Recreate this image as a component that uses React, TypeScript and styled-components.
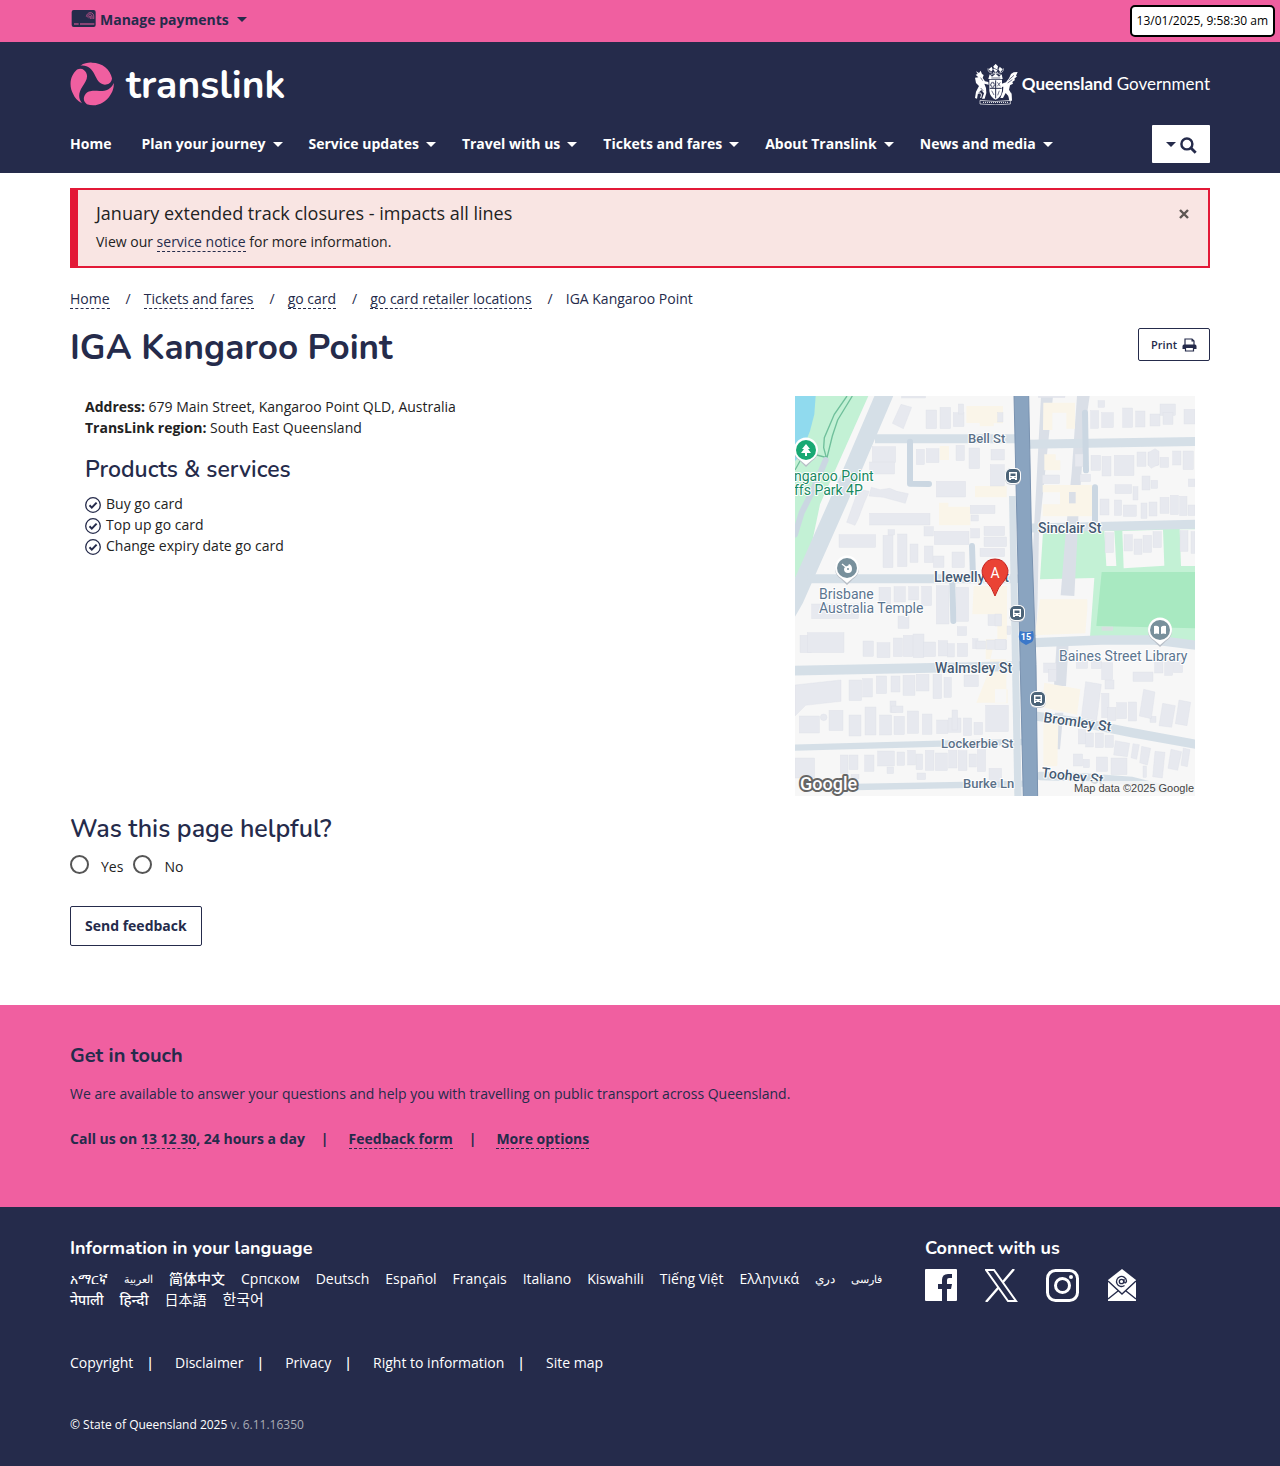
import React from "react";
import styled, { createGlobalStyle } from "styled-components";

const navy = "#252b4b";
const pink = "#f05fa0";
const bodyFont = '"Open Sans", "Noto Sans", "Noto Sans CJK SC", sans-serif';
const headFont = 'Nunito, Lato, "Open Sans", sans-serif';

const GlobalStyle = createGlobalStyle`
  *, *::before, *::after { box-sizing: border-box; }
  body { margin: 0; background: #fff; color: #222; font: 14px/21px ${bodyFont}; }
  h1, h2, p, ul { margin: 0; padding: 0; }
  ul { list-style: none; }
  a { color: inherit; text-decoration: none; }
  button { font: inherit; color: inherit; cursor: pointer; }
  svg { display: block; flex: none; }
`;

const Container = styled.div`
  max-width: 1170px;
  margin: 0 auto;
  padding: 0 15px;
`;

const Row = styled.div<{ $between?: boolean; $align?: string }>`
  display: flex;
  align-items: ${(p) => p.$align ?? "center"};
  justify-content: ${(p) => (p.$between ? "space-between" : "flex-start")};
`;

const Caret = styled.span`
  display: inline-block;
  border: 5px solid transparent;
  border-top-color: currentColor;
  border-bottom: 0;
`;

/* ---------- top bar ---------- */
const TopBar = styled.div`
  position: relative;
  background: ${pink};
  color: ${navy};
`;
const PaymentsButton = styled.button`
  display: flex;
  align-items: center;
  gap: 8px;
  height: 42px;
  padding: 0 0 4px;
  border: 0;
  background: none;
  font-weight: 700;
`;
const CardLabel = styled.span`
  display: flex;
  align-items: center;
  gap: 3px;
`;
const Timestamp = styled.time`
  position: absolute;
  top: 5px;
  right: 5px;
  padding: 4px 5px;
  border: 2px solid #000;
  border-radius: 5px;
  background: #fff;
  color: #000;
  font-size: 12px;
  line-height: 20px;
`;

/* ---------- header ---------- */
const Header = styled.header`
  background: ${navy};
  color: #fff;
  padding: 20px 0 10px;
`;
const Brand = styled.a`
  display: flex;
  align-items: center;
  gap: 12px;
`;
const Wordmark = styled.span`
  padding-top: 4px;
  font: 700 39px/40px ${headFont};
`;
const GovBrand = styled.a`
  display: flex;
  align-items: center;
  gap: 4px;
  font: 400 17px/44px Lato, sans-serif;
`;
const NavRow = styled(Row)`
  margin-top: 19px;
`;
const NavList = styled.ul`
  display: flex;
  gap: 26px;
`;
const NavLink = styled.a`
  display: flex;
  align-items: center;
  gap: 7px;
  padding-bottom: 2px;
  font-weight: 700;

  span { margin-top: 2px; }
`;
const NavHome = styled(NavLink)`
  margin-right: 4px;
`;
const SearchButton = styled.button`
  display: flex;
  align-items: center;
  justify-content: center;
  gap: 4px;
  width: 58px;
  height: 38px;
  padding: 0;
  border: 0;
  border-radius: 1px;
  background: #fff;
  color: ${navy};

  svg { margin-top: 3px; }
`;

/* ---------- main ---------- */
const Alert = styled.section`
  display: flex;
  justify-content: space-between;
  align-items: flex-start;
  margin-top: 15px;
  padding: 11px 18px 14px;
  border: 2px solid #e31937;
  border-left-width: 8px;
  background: #f9e5e3;
`;
const AlertTitle = styled.h2`
  margin-bottom: 6px;
  font: 400 18px/24px ${bodyFont};
`;
const CloseButton = styled.button`
  display: flex;
  padding: 8px 1px;
  border: 0;
  background: none;
`;
const DashedLink = styled.a`
  border-bottom: 1px dashed ${navy};
  color: ${navy};
`;
const Crumbs = styled.ol`
  display: flex;
  flex-wrap: wrap;
  margin: 21px 0 0;
  padding: 0;
  list-style: none;
  line-height: 19px;
  color: ${navy};

  li + li::before {
    content: "/";
    padding: 0 13px 0 16px;
  }
`;
const TitleRow = styled(Row)`
  margin-top: 16px;
`;
const PageTitle = styled.h1`
  font: 700 35px/48px ${headFont};
  color: ${navy};
`;
const PrintButton = styled.button`
  display: flex;
  align-items: center;
  gap: 5px;
  height: 33px;
  margin-top: 4px;
  padding: 0 12px;
  border: 1px solid ${navy};
  border-radius: 2px;
  background: #fff;
  color: ${navy};
  font-size: 11px;
  font-weight: 600;
`;
const Details = styled.div`
  display: flex;
  justify-content: space-between;
  gap: 30px;
  margin-top: 24px;
  padding: 0 15px;
`;
const SubTitle = styled.h2`
  margin: 17px 0 8px;
  font: 600 23px/30px ${headFont};
  color: ${navy};
`;
const Service = styled.li`
  display: flex;
  align-items: center;
  gap: 5px;

  svg { margin-top: 2px; }
`;
const HelpTitle = styled.h2`
  margin-top: 17px;
  font: 600 25px/32px ${headFont};
  color: ${navy};
`;
const Choices = styled.div`
  display: flex;
  gap: 10px;
  margin-top: 10px;
`;
const Choice = styled.label`
  display: flex;
  gap: 12px;
  line-height: 24px;
`;
const Radio = styled.input`
  appearance: none;
  width: 19px;
  height: 19px;
  margin: 0;
  border: 2px solid #555;
  border-radius: 50%;
  background: #fff;
  &:checked { background: ${navy}; box-shadow: inset 0 0 0 3px #fff; }
`;
const SendButton = styled.button`
  height: 40px;
  margin: 27px 0 59px;
  padding: 0 14px 2px;
  border: 1px solid ${navy};
  border-radius: 2px;
  background: #fff;
  color: ${navy};
  font-weight: 700;
`;

/* ---------- footer ---------- */
const Contact = styled.section`
  padding: 37px 0 58px;
  background: ${pink};
  color: ${navy};
`;
const ContactTitle = styled.h2`
  margin-bottom: 13px;
  font: 700 20px/28px ${headFont};
`;
const ContactLinks = styled(Row)`
  margin-top: 25px;
  font-weight: 700;
  line-height: 19px;
`;
const Bar = styled.span`
  padding: 0 20px 0 16px;
`;
const Footer = styled.footer`
  padding: 27px 0 31px;
  background: ${navy};
  color: #fff;
`;
const FooterGrid = styled.div`
  display: grid;
  grid-template-columns: 3fr 1fr;
`;
const FooterTitle = styled.h2`
  margin-bottom: 6px;
  font: 700 18px/28px ${headFont};
`;
const Languages = styled.ul`
  display: flex;
  flex-wrap: wrap;
  column-gap: 16px;
`;
const Language = styled.li<{ $size?: number; $thin?: boolean }>`
  height: 21px;
  font-size: ${(p) => p.$size ?? 14}px;
  font-weight: ${(p) => (p.$thin ? 400 : 500)};
`;
const Social = styled.div`
  display: flex;
  gap: 28px;
  padding-top: 1px;
`;
const LegalLinks = styled.ul`
  display: flex;
  flex-wrap: wrap;
  margin-top: 42px;
  font-weight: 500;

  li + li::before {
    content: "|";
    padding: 0 21px 0 13px;
    font-weight: 600;
  }
`;
const Copyright = styled.p`
  margin-top: 41px;
  font-size: 12px;
  font-weight: 500;
`;
const Version = styled.span`
  color: #a9abb5;
  font-weight: 400;
`;

/* ---------- drawings ---------- */
const CardIcon = () => (
  <svg width="27" height="20" viewBox="0 0 81 60" aria-hidden="true">
    <rect x="5" y="3" width="72" height="51" rx="6" fill={navy} />
    <path d="M12 45h14M30 45h43" stroke={pink} strokeWidth="3" />
    <g fill="none" stroke={pink} strokeWidth="2">
      <path d="M49 23C51 13 58 9 66 12c5 3 6 9 5 18M53 25c1-8 5-11 9-9 4 2 5 6 4 14M57 28c0-6 2-8 4-7 2 1 1 5 1 9" />
    </g>
  </svg>
);

const blade =
  "M62 197C75 188 90 187 97 188C128 188 152 208 157 235C156 250 144 254 136 254C118 253 112 238 104 222C96 207 84 194 62 197Z";
const SwirlLogo = () => (
  <svg width="44" height="44" viewBox="31 186 132 132" fill={pink} aria-hidden="true">
    <path d={blade} />
    <path d={blade} transform="rotate(120 97 252)" />
    <path d={blade} transform="rotate(240 97 252)" />
  </svg>
);

const CoatOfArms = () => (
  <svg width="44" height="42" viewBox="0 0 132 126" fill="#fff" aria-hidden="true">
    <path d="M46 50h38v33q-2 20-19 27q-17-7-19-27z" />
    <path d="M65 52v54M47 76h36" stroke={navy} strokeWidth="3" />
    <path d="M53 58h6v5h5v5h-5v5h-6v-5h-4v-5h4zM70 58l9 12M79 58l-9 12M53 83l7 13M76 83l-5 14" stroke={navy} strokeWidth="2" fill="none" />
    <path d="M43 48l4-14 7 7 11-9 10 9 8-7 3 14zM58 10l7-7 7 7-3 14h-8zM44 19l9-8 3 9-5 8zM86 19l-9-8-3 9 5 8z" />
    <path d="M54 30q-13-1-12-14M76 30q13-1 12-14M65 4v29M49 37q16-12 33 0M56 18l17 12M74 18L57 30" fill="none" stroke="#fff" strokeWidth="2" />
    <path d="M52 45h27M57 14l15 8M46 23l8 4" stroke={navy} strokeWidth="2" />
    <path d="M13 43l-8-8 6-2-5-8 9 5 5-7 4 10 5 3-3 9 7 10 10 2 1 8-13-3 5 13 1 15-5 17h-8l6-16-8-10-10 10-3 16-6-2 3-19 9-17-9-9-3-16z" />
    <path d="M96 58l9-12 6-13 8-5 12-1-5 11 3 2-8 7 2 4-8 6 2 5-9 5-3 13 8 14 1 19h-8l-3-14-8-9-8 15h-8l8-20 1-14-8 1 1-9z" />
    <path d="M104 51l16-14M101 60l14-10M20 44l6 9M20 75l8 9" stroke={navy} strokeWidth="2" />
    <path d="M12 91q15-6 8 14M112 91q-10-1-5 14" stroke="#fff" strokeWidth="3" fill="none" />
    <path d="M18 112q47 7 91 0v11q-45 5-91 0z" fill="none" stroke="#fff" strokeWidth="2" />
    <path d="M27 118h76" stroke="#fff" strokeWidth="3" strokeDasharray="3 3" />
  </svg>
);

const SearchIcon = () => (
  <svg width="17" height="17" viewBox="0 0 18 18" fill="none" stroke={navy} strokeWidth="2.6" aria-hidden="true">
    <circle cx="7.3" cy="7.3" r="5.8" />
    <path d="M11.6 11.6l5 5" strokeWidth="3" />
  </svg>
);

const CloseIcon = () => (
  <svg width="10" height="10" viewBox="0 0 10 10" stroke="#5d5653" strokeWidth="2.4" aria-hidden="true">
    <path d="M1 1l8 8M9 1L1 9" />
  </svg>
);

const PrintIcon = () => (
  <svg width="15" height="14" viewBox="0 0 15 14" fill={navy} aria-hidden="true">
    <path d="M3 7V1h7l2 2v4" fill="none" stroke={navy} strokeWidth="1.2" />
    <path d="M9.5 1v2.5H12z" />
    <path d="M2 6.500h11Q14.500 6.500 14.500 8.500V11H.5V8.500Q.5 6.500 2 6.500z" />
    <path d="M3.500 9.500h8V13h-8z" fill="#fff" stroke={navy} strokeWidth="1.2" />
  </svg>
);

const CheckIcon = () => (
  <svg width="16" height="16" viewBox="0 0 16 16" fill="none" stroke={navy} aria-hidden="true">
    <circle cx="8" cy="8" r="7.3" strokeWidth="1.3" />
    <path d="M4.500 8.300l2.300 2.300 4.800-5" strokeWidth="2" />
  </svg>
);

/* Building footprints in map units: x, y, width, height. */
const buildings: number[][] = [
  [320, 0, 72, 6], [393, 42, 32, 56], [435, 34, 32, 64], [475, 50, 32, 42], [490, 24, 16, 30],
  [232, 152, 70, 48], [224, 198, 75, 36], [364, 160, 24, 46], [394, 158, 38, 42], [483, 148, 25, 46],
  [522, 156, 32, 62], [588, 160, 40, 32], [586, 206, 42, 64], [424, 256, 88, 47], [224, 352, 181, 35],
  [132, 416, 110, 38], [264, 418, 30, 97], [308, 414, 28, 98], [279, 401, 20, 16], [345, 444, 24, 55],
  [387, 392, 28, 28], [418, 406, 104, 40], [527, 398, 27, 28], [526, 328, 74, 25], [528, 357, 22, 18],
  [567, 391, 62, 28], [567, 423, 68, 29], [555, 457, 74, 25], [388, 450, 26, 50], [415, 480, 32, 34],
  [471, 468, 37, 47], [252, 574, 35, 50], [297, 572, 34, 46], [341, 572, 30, 40], [380, 571, 30, 58],
  [424, 569, 38, 115], [484, 574, 37, 102],
  [608, 50, 16, 28], [730, 0, 80, 5], [887, 44, 24, 53], [920, 50, 35, 45], [909, 14, 20, 20],
  [983, 36, 30, 58], [1022, 45, 28, 48], [1065, 54, 30, 36], [1095, 24, 46, 34], [1104, 50, 30, 35], [1167, 40, 33, 44],
  [840, 174, 24, 38], [888, 178, 29, 45], [921, 181, 27, 59], [958, 178, 59, 61], [1026, 168, 27, 43],
  [1059, 168, 32, 40], [1095, 184, 26, 30], [1133, 165, 25, 42], [1164, 165, 31, 56], [742, 237, 52, 26],
  [855, 235, 32, 22], [960, 266, 50, 27], [1014, 272, 15, 40], [1041, 240, 24, 42], [1068, 253, 20, 24], [1180, 249, 20, 23],
  [915, 309, 27, 48], [958, 312, 22, 46], [985, 327, 39, 34], [1038, 321, 18, 46], [1062, 318, 24, 42],
  [1095, 304, 27, 48], [1126, 298, 24, 58], [1154, 301, 22, 58], [1179, 327, 21, 32],
  [930, 410, 26, 60], [987, 416, 25, 49], [1017, 429, 24, 46], [1044, 418, 26, 51], [1074, 407, 25, 48],
  [1155, 404, 24, 62], [1188, 407, 12, 65],
  [50, 624, 140, 44], [15, 718, 35, 52], [37, 710, 110, 60], [309, 660, 33, 37], [579, 656, 30, 33],
  [204, 735, 31, 46], [246, 740, 39, 45], [295, 726, 27, 56], [325, 718, 28, 64], [354, 714, 33, 71],
  [386, 738, 36, 44], [430, 734, 28, 46], [457, 743, 21, 40], [487, 692, 28, 27], [487, 742, 31, 40],
  [533, 728, 16, 30], [543, 735, 29, 24], [575, 732, 60, 28],
  [162, 852, 38, 62], [203, 848, 29, 55], [244, 840, 31, 53], [288, 840, 27, 48], [324, 838, 36, 60],
  [364, 835, 38, 50], [414, 835, 26, 73], [447, 844, 22, 60], [507, 837, 43, 35],
  [13, 960, 60, 51], [102, 943, 42, 61], [162, 957, 36, 63], [210, 933, 33, 84], [254, 957, 36, 60],
  [285, 915, 18, 34], [290, 930, 34, 20], [297, 961, 31, 55], [337, 945, 34, 67], [382, 954, 29, 61],
  [425, 972, 34, 41], [460, 966, 38, 43], [471, 942, 17, 60], [505, 966, 25, 53], [537, 979, 26, 37], [572, 928, 68, 79],
  [0, 1086, 59, 60], [136, 1077, 23, 55], [162, 1077, 27, 44], [209, 1077, 28, 49], [248, 1065, 50, 45],
  [276, 1113, 20, 20], [306, 1068, 23, 40], [338, 1063, 23, 44], [363, 1074, 20, 47], [391, 1063, 26, 60],
  [421, 1071, 36, 53], [461, 1063, 25, 53], [490, 1064, 26, 60], [522, 1074, 22, 39], [547, 1061, 25, 66],
  [168, 1135, 24, 14], [366, 1131, 26, 20], [582, 1117, 38, 40],
  [600, 654, 20, 36], [636, 690, 11, 26], [600, 730, 33, 30], [746, 801, 38, 28], [760, 820, 24, 36],
  [844, 795, 34, 22], [889, 795, 30, 23], [920, 800, 33, 51], [930, 852, 27, 27], [1014, 828, 60, 28],
  [1079, 795, 25, 36], [1109, 795, 24, 43], [1135, 794, 28, 36],
  [920, 892, 22, 73], [937, 934, 26, 40], [965, 920, 30, 48], [1000, 918, 25, 57], [1065, 961, 18, 18],
  [850, 1000, 22, 44], [872, 1011, 23, 42], [901, 1011, 24, 44], [930, 1018, 25, 36], [835, 1074, 28, 36],
  [865, 1090, 18, 25], [904, 1083, 34, 43], [948, 1086, 48, 50], [1044, 1110, 10, 34],
];

/* Rotated footprints. */
const blocks = [
  "M318 25L350 34 325 98 292 82z", "M190 280L223 286 207 322 191 365 180 388 155 379z",
  "M229 274L256 281 284 277 306 286 340 293 331 322 265 304 222 300z",
  "M0 867L138 852V916L32 928 0 960z",
  "M872 857L919 865 905 973 859 963z", "M1046 880L1080 888 1069 968 1033 960z",
  "M1103 922L1141 929 1130 994 1092 989z", "M1152 912L1187 919 1176 989 1141 983z",
  "M961 1034L1004 1042 997 1082 956 1077z", "M1014 1043L1033 1046 1025 1090 1008 1085z",
  "M1040 1051L1067 1057 1057 1107 1034 1100z", "M1080 1066L1110 1069 1102 1146 1073 1142z",
  "M1128 1060L1160 1067 1148 1123 1119 1117z", "M1165 1056L1185 1061 1177 1112 1158 1108z",
  "M1060 170L1080 158 1092 166V205L1068 217 1060 207z",
];

const Pin = ({ x, y, fill, children }: { x: number; y: number; fill: string; children: React.ReactNode }) => (
  <g transform={`translate(${x} ${y})`}>
    <path d="M0 16l-6-6a12 12 0 1 1 12 0z" fill="#b8bec6" transform="translate(0 1)" />
    <path d="M0 15l-6-5a12 12 0 1 1 12 0z" fill="#fff" />
    <circle r="10" fill={fill} />
    {children}
  </g>
);

const BusStop = ({ x, y }: { x: number; y: number }) => (
  <g transform={`translate(${x} ${y})`}>
    <rect x="-8" y="-8" width="16" height="17" rx="6" fill="#c3c9d2" />
    <rect x="-8" y="-8" width="16" height="16" rx="6" fill="#fff" />
    <rect x="-7" y="-7" width="14" height="14" rx="5" fill="#4b6378" />
    <path d="M-4-4h8v8h-2v-1h-4v1h-2z" fill="#fff" />
    <path d="M-2.500-2.500h5v2.500h-5z" fill="#4b6378" />
    <path d="M-2.500 1.500h1M1.500 1.500h1" stroke="#4b6378" />
  </g>
);

const MapText = styled.text<{ $kind: "road" | "lane" | "place" | "park" }>`
  font-family: Roboto, sans-serif;
  font-size: ${(p) => (p.$kind === "lane" ? "13px" : "14px")};
  font-weight: ${(p) => (p.$kind === "road" || p.$kind === "lane" ? 500 : 400)};
  fill: ${(p) => ({ road: "#455a73", lane: "#5b7188", place: "#5b7590", park: "#188a62" })[p.$kind]};
  stroke: #fff;
  stroke-width: 2px;
  stroke-linejoin: round;
  paint-order: stroke;
`;
const MapCredit = styled.text`
  font: 11px Arial, "Liberation Sans", sans-serif;
  fill: #444;
`;
const GoogleMark = styled.text`
  font: 500 18px Roboto, sans-serif;
  fill: #fff;
  stroke: #666;
  stroke-width: 4px;
  stroke-linejoin: round;
  paint-order: stroke;
`;
const MarkerText = styled.text`
  font: 14px Roboto, sans-serif;
  fill: #fff;
  text-anchor: middle;
`;
const ShieldText = styled.text`
  font: 700 9px Roboto, sans-serif;
  fill: #fff;
  text-anchor: middle;
`;
const MapFrame = styled.svg`
  max-width: 100%;
`;

const LocationMap = () => (
  <MapFrame width="400" height="400" viewBox="0 0 400 400" role="img" aria-label="Map of IGA Kangaroo Point">
    <g transform="scale(.333333)">
      <path fill="#f7f7f7" d="M0 0h1200v1200H0z" />
      <path fill="#c3f1d5" d="M0 0h220L75 325 50 445 0 550z" />
      <path fill="#90daee" d="M0 0h62L58 55 45 105 15 180 0 195z" />
      <g fill="none" stroke="#6fbf9b" strokeWidth="4">
        <path d="M156 0L118 55 88 125 86 155 94 185M172 0L128 72 112 120 96 185 65 177M15 195L0 222" />
      </g>
      <path d="M92 192L55 280 20 350 0 415" fill="none" stroke="#cbd7e2" strokeWidth="18" strokeLinecap="round" />

      <path fill="#c3f1d5" d="M744 408L1200 396V735L1050 720 885 724 898 546 735 550z" />
      <path fill="#f7f7f7" d="M928 405h30l6 105h-30zM982 405l122-4 4 108-122 8zM1154 400h46v110h-42z" />
      <path fill="#a8e9c1" d="M920 528H1200V697L904 690z" />
      <rect x="920" y="692" width="34" height="12" fill="#d8dfe0" />

      <path fill="#dadfe7" d="M738 0h36L732 408 728 606 724 720H700L718 380zM846 0h38L868 110 850 365 838 600 797 598 812 410 830 230z" />
      <path fill="#dadfe7" d="M785 740h36l-8 130h-36zM780 950h25l-10 110h-20z" />
      <path fill="#faf5e9" d="M745 20h95v78h-26V50h-42v52h-28zM748 175h34v18h14v30h-48zM743 267h148v94H743v-36h52v-36h-52zM514 30h110v52h-28v9h-42v-10h-40zM434 150h28v42h-28zM540 270h95v34h-95zM432 320h28v12h66v56h-94zM536 570h100v160h-36l-28 120-28 70h90V790h-62v-60h35v-75h-75zM735 610h142v28l-6 74-152 6zM600 880h38v42h-38zM748 860l108 20-10 76-106-22zM745 975l45 6-3 130h-42z" />
      <rect x="822" y="288" width="20" height="34" fill="#dadfe7" />

      <g fill="none" stroke="#d5dfe7" strokeLinecap="round">
        <path d="M275-20L175 215 0 610 -20 645" strokeWidth="52" />
        <path d="M240 128H660M700 145L1220 136M710 396L1220 384" strokeWidth="27" strokeLinecap="butt" />
        <path d="M50 548H665" strokeWidth="27" />
        <path d="M0 824L675 810" strokeWidth="29" />
        <path d="M720 740L920 732 1080 732 1220 750" strokeWidth="28" />
        <path d="M720 960L850 978 1010 1010 1220 1048" strokeWidth="28" />
        <path d="M0 1055L440 1043 680 1038" strokeWidth="19" />
        <path d="M180 1173L690 1163" strokeWidth="19" />
        <path d="M735 1140L870 1144 1010 1155 1110 1180" strokeWidth="25" />
      </g>
      <g fill="none" stroke="#cbd7e2" strokeWidth="18" strokeLinecap="round" strokeLinejoin="round">
        <path d="M345 137V263L402 264M531 450L534 545M472 560L475 675M870 50L873 223M900 274V375" />
      </g>
      <g fill="#e7e9ef" stroke="#dcdfe6" strokeWidth="1">
        {buildings.map(([x, y, w, h]) => (
          <rect key={`${x}-${y}`} x={x} y={y} width={w} height={h} />
        ))}
        {blocks.map((d) => (
          <path key={d} d={d} />
        ))}
        <circle cx="86" cy="964" r="10" />
      </g>
      <path fill="#d5dfe7" d="M642 300h20l18 900h-22z" />
      <path fill="#8aa4c0" stroke="#7892b0" strokeWidth="3" d="M657-4h44l8 400 14 410 5 400h-43l-14-600z" />
    </g>

    <MapText $kind="lane" x="173" y="47">Bell St</MapText>
    <MapText $kind="road" x="243" y="137">Sinclair St</MapText>
    <MapText $kind="road" x="139" y="186">Llewellyn St</MapText>
    <MapText $kind="road" x="140" y="277">Walmsley St</MapText>
    <MapText $kind="lane" x="146" y="352">Lockerbie St</MapText>
    <MapText $kind="lane" x="168" y="392">Burke Ln</MapText>
    <MapText $kind="road" transform="translate(248 326) rotate(8)">Bromley St</MapText>
    <MapText $kind="road" transform="translate(246 381) rotate(7)">Toohey St</MapText>
    <MapText $kind="park" x="-1" y="85">ngaroo Point</MapText>
    <MapText $kind="park" x="-1" y="99">ffs Park 4P</MapText>
    <MapText $kind="place" x="24" y="203">Brisbane</MapText>
    <MapText $kind="place" x="24" y="217">Australia Temple</MapText>
    <MapText $kind="place" x="264" y="265">Baines Street Library</MapText>

    <Pin x={11} y={54} fill="#19a974">
      <path d="M0-6l4 5H2l3 4H1v3h-2V3h-4l3-4h-2z" fill="#fff" />
    </Pin>
    <Pin x={52} y={172} fill="#78909c">
      <path d="M-5-4l5 4" stroke="#fff" strokeWidth="1.3" />
      <path d="M-1-1q1-2 2-1l1-2q3 1 3 5a4 4 0 0 1-8 0q0-2 2-2z" fill="#fff" />
      <circle cx="1" cy="1" r="1" fill="#78909c" />
    </Pin>
    <Pin x={365} y={234} fill="#78909c">
      <path d="M-6-4q3-1 5 1v7q-2-1-5 0zM6-4q-3-1-5 1v7q2-1 5 0z" fill="#fff" />
    </Pin>
    <BusStop x={218} y={80} />
    <BusStop x={222} y={217} />
    <BusStop x={243} y={303} />
    <path d="M225 235q7 2 13 0 2 7-1 11l-6 3-5-3q-4-4-1-11z" fill="#3b78c9" />
    <ShieldText x="231" y="244">15</ShieldText>
    <path d="M200 200q-3-9-9-15-6-8-3-14a13 13 0 0 1 24 0q3 6-3 14-6 6-9 15z" fill="#ea4335" stroke="#c5221f" />
    <MarkerText x="200" y="182">A</MarkerText>
    <path fill="#f7f7f7" fillOpacity=".8" d="M278 385h122v15H278z" />
    <MapCredit x="279" y="396">Map data ©2025 Google</MapCredit>
    <GoogleMark x="5" y="394">Google</GoogleMark>
  </MapFrame>
);

const FacebookIcon = () => (
  <svg width="32" height="32" viewBox="0 0 32 32" aria-hidden="true">
    <path fill="#fff" d="M1 0h30q1 0 1 1v30q0 1-1 1h-9V20h4l1-5h-5v-4q0-2 2-2h3V5h-4q-6 0-6 6v4h-4v5h4v12H1q-1 0-1-1V1q0-1 1-1z" />
  </svg>
);
const XIcon = () => (
  <svg width="33" height="33" viewBox="0 0 33 33" fill="none" stroke="#fff" aria-hidden="true">
    <path d="M1 1h8l22 31h-8z" strokeWidth="2" />
    <path d="M29 0L17.500 13.500M13.500 18.500L1 33" strokeWidth="2.400" />
  </svg>
);
const InstagramIcon = () => (
  <svg width="33" height="33" viewBox="0 0 33 33" fill="none" stroke="#fff" strokeWidth="3" aria-hidden="true">
    <rect x="1.500" y="1.500" width="30" height="30" rx="8" />
    <circle cx="16.500" cy="16.500" r="7" />
    <circle cx="25" cy="8" r="2" fill="#fff" stroke="none" />
  </svg>
);
const MailIcon = () => (
  <svg width="30" height="32" viewBox="0 0 30 32" aria-hidden="true">
    <path d="M15 0L29 11V32H1V11z" fill="#fff" />
    <path d="M1 12l14 13 14-13M1 30l10-8M29 30l-10-8" fill="none" stroke={navy} strokeWidth="1.400" />
    <g fill="none" stroke={navy} strokeWidth="1.300">
      <circle cx="14.500" cy="12.500" r="2.200" />
      <path d="M17 10v3.500q2 1 2.500-1.500a5 5 0 1 0-2 4.500" />
    </g>
  </svg>
);

const navItems = ["Plan your journey", "Service updates", "Travel with us", "Tickets and fares", "About Translink", "News and media"];
const crumbs = ["Home", "Tickets and fares", "go card", "go card retailer locations"];
const services = ["Buy go card", "Top up go card", "Change expiry date go card"];
const languages: { name: string; size?: number; thin?: boolean }[] = [
  { name: "አማርኛ" }, { name: "العربية", size: 11 }, { name: "简体中文" }, { name: "Српском" }, { name: "Deutsch" },
  { name: "Español" }, { name: "Français" }, { name: "Italiano" }, { name: "Kiswahili" }, { name: "Tiếng Việt" },
  { name: "Ελληνικά" }, { name: "دري", size: 12 }, { name: "فارسی", size: 11 }, { name: "नेपाली" },
  { name: "हिन्दी", size: 15 }, { name: "日本語", thin: true }, { name: "한국어", size: 15, thin: true },
];
const legal = ["Copyright", "Disclaimer", "Privacy", "Right to information", "Site map"];

export default function App() {
  return (
    <>
      <GlobalStyle />
      <TopBar>
        <Container>
          <PaymentsButton type="button">
            <CardLabel><CardIcon />Manage payments</CardLabel>
            <Caret />
          </PaymentsButton>
        </Container>
        <Timestamp dateTime="2025-01-13T09:58:30">13/01/2025, 9:58:30 am</Timestamp>
      </TopBar>

      <Header>
        <Container>
          <Row $between>
            <Brand href="#"><SwirlLogo /><Wordmark>translink</Wordmark></Brand>
            <GovBrand href="#"><CoatOfArms /><span><b>Queensland</b> Government</span></GovBrand>
          </Row>
          <NavRow as="nav" $between aria-label="Main">
            <NavList>
              <li><NavHome href="#">Home</NavHome></li>
              {navItems.map((item) => (
                <li key={item}><NavLink href="#">{item}<Caret /></NavLink></li>
              ))}
            </NavList>
            <SearchButton type="button" aria-label="Search"><Caret /><SearchIcon /></SearchButton>
          </NavRow>
        </Container>
      </Header>

      <Container as="main">
        <Alert>
          <div>
            <AlertTitle>January extended track closures - impacts all lines</AlertTitle>
            <p>View our <DashedLink href="#">service notice</DashedLink> for more information.</p>
          </div>
          <CloseButton type="button" aria-label="Close"><CloseIcon /></CloseButton>
        </Alert>

        <nav aria-label="Breadcrumb">
          <Crumbs>
            {crumbs.map((c) => (
              <li key={c}><DashedLink href="#">{c}</DashedLink></li>
            ))}
            <li>IGA Kangaroo Point</li>
          </Crumbs>
        </nav>

        <TitleRow $between $align="flex-start">
          <PageTitle>IGA Kangaroo Point</PageTitle>
          <PrintButton type="button">Print<PrintIcon /></PrintButton>
        </TitleRow>

        <Details>
          <div>
            <p><b>Address:</b> 679 Main Street, Kangaroo Point QLD, Australia</p>
            <p><b>TransLink region:</b> South East Queensland</p>
            <SubTitle>Products &amp; services</SubTitle>
            <ul>
              {services.map((s) => (
                <Service key={s}><CheckIcon />{s}</Service>
              ))}
            </ul>
          </div>
          <LocationMap />
        </Details>

        <form>
          <HelpTitle id="helpful">Was this page helpful?</HelpTitle>
          <Choices role="radiogroup" aria-labelledby="helpful">
            <Choice><Radio type="radio" name="helpful" value="yes" />Yes</Choice>
            <Choice><Radio type="radio" name="helpful" value="no" />No</Choice>
          </Choices>
          <SendButton type="button">Send feedback</SendButton>
        </form>
      </Container>

      <Contact>
        <Container>
          <ContactTitle>Get in touch</ContactTitle>
          <p>We are available to answer your questions and help you with travelling on public transport across Queensland.</p>
          <ContactLinks $align="baseline">
            <span>Call us on <DashedLink href="#">13 12 30</DashedLink>, 24 hours a day</span>
            <Bar>|</Bar>
            <DashedLink href="#">Feedback form</DashedLink>
            <Bar>|</Bar>
            <DashedLink href="#">More options</DashedLink>
          </ContactLinks>
        </Container>
      </Contact>

      <Footer>
        <Container>
          <FooterGrid>
            <section>
              <FooterTitle>Information in your language</FooterTitle>
              <Languages>
                {languages.map((l) => (
                  <Language key={l.name} $size={l.size} $thin={l.thin}><a href="#">{l.name}</a></Language>
                ))}
              </Languages>
            </section>
            <section>
              <FooterTitle>Connect with us</FooterTitle>
              <Social>
                <a href="#" aria-label="Facebook"><FacebookIcon /></a>
                <a href="#" aria-label="X"><XIcon /></a>
                <a href="#" aria-label="Instagram"><InstagramIcon /></a>
                <a href="#" aria-label="Email"><MailIcon /></a>
              </Social>
            </section>
          </FooterGrid>
          <LegalLinks>
            {legal.map((l) => (
              <li key={l}><a href="#">{l}</a></li>
            ))}
          </LegalLinks>
          <Copyright>© State of Queensland 2025 <Version>v. 6.11.16350</Version></Copyright>
        </Container>
      </Footer>
    </>
  );
}
